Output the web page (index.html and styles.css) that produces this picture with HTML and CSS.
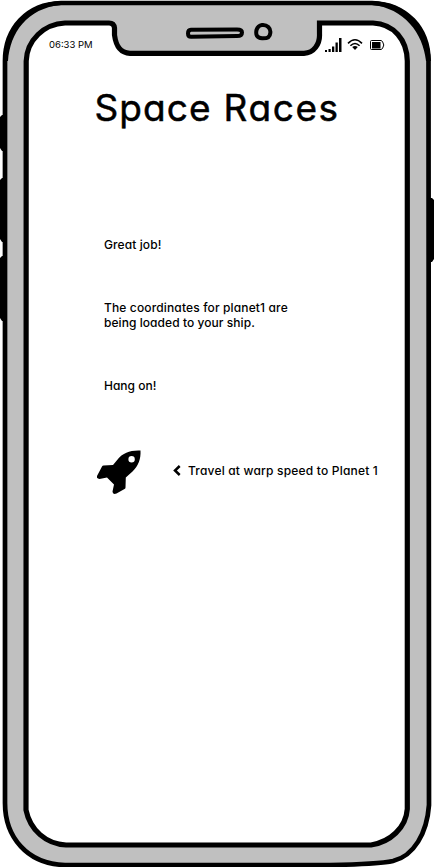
FILE: index.html
```
<!DOCTYPE html>
<html lang="en">
<head>
<meta charset="utf-8">
<title>Space Races</title>
<link rel="stylesheet" href="styles.css">
</head>
<body>
<div class="phone">
  <svg class="frame" viewBox="0 0 434 867" aria-hidden="true">
    <path class="button" d="M4 115H2L0 117V148L2 151H4ZM4 178H2L0 180V239L2 242H4ZM4 256H2L0 258V318L2 321H4ZM430 198H432L434 200V259L432 262H430Z"/>
    <path class="body" d="M61 3H372C406 4 428.500 28 428.500 61L429 805C427 833 414 856 393 861C379 864 360 864.500 330 865H65C27 864 5 837 5 803V61C5 28 27 4 61 3Z"/>
    <path class="shade" d="M61 1C27 2 4 29 3 61H8C10 33 27 8 61 5ZM372 1C407 2 429 27 431 61H426C423 33 404 8 372 5Z"/>
    <path class="screen" d="M65 23H109Q114 23 114.500 28V35C116 46 120 53 130 53.300H304C314 53 320 44 319.500 34V23H373C394 24 407 40 407.300 61V809C406 828 390 842 371 845H66C46 844 30 830 26 810L26.200 61C27 40 44 24 65 23Z"/>
    <path class="speaker" d="M191 29.800L237 29.500Q242 29.500 242 32.500Q242 36 237 36L191 36.800Q188 36.800 188 33.500Q188 30 191 29.800Z"/>
    <path class="camera" d="M262 25C267 24.500 271 28 270.300 33C270 37.500 267 38.500 262 38.300C257 38 255.500 35 256.500 30Q258 25.500 262 25Z"/>
  </svg>
  <main class="content">
    <header class="status">
      <span class="time">06:33 PM</span>
      <svg class="indicators" viewBox="0 0 62 16" aria-hidden="true">
        <path d="M0 12h2v2H0zM3.500 11h2.200V14h-2.200zM7 8.500h2.300V14H7zM10.500 4.500h2.300V14h-2.300zM14 0h2.500v14H14z"/>
        <path class="wave" d="M23 5.400Q30 -1.800 37 5.400M25.400 7.800Q30 3.200 34.600 7.800"/>
        <path d="M27.200 9.100Q30 7 32.800 9.100L30 12Z"/>
        <path class="cell" d="M46.500 2.500h9.500l1.500 1q2.600 3.500 0 7l-1.500 1h-9.500q-1 0-1-1v-7q0-1 1-1z"/>
        <path d="M47 4h8.500v6.500h-8.500z"/>
      </svg>
    </header>
    <h1 class="title"><span class="word">Space</span> Races</h1>
    <p class="line greeting">Great job!</p>
    <p class="line"><span class="first">The coordinates for planet1 are</span><br><span class="second">being loaded to your ship.</span></p>
    <p class="line wait">Hang on!</p>
    <div class="action">
      <svg class="rocket" viewBox="0 0 46 46" aria-hidden="true">
        <path fill-rule="evenodd" d="M44.500 .5C34 0 27 3 22 9L17 15L7.500 15.500Q6.500 15.500 6 16.500L1 26Q.5 28 2 28.500L3.500 29L11 27.500L18 34.500L16.500 41.500Q16.500 43.500 18.500 44L20.500 43.500L28.500 39Q29.500 38.500 29.500 37.500L29.800 27.500L36.500 21.500C42.500 15.500 45 9 44.500 .5ZM38.800 9.200A3.200 3.200 0 1 1 32.400 9.200A3.200 3.200 0 1 1 38.800 9.200Z"/>
      </svg>
      <svg class="chevron" viewBox="0 0 8 11" aria-hidden="true"><path d="M6.700 1L2 5.500L6.700 10"/></svg>
      <span class="travel">Travel at warp speed to Planet 1</span>
    </div>
  </main>
</div>
</body>
</html>
```
FILE: styles.css
```
* { box-sizing: border-box; }
body {
  margin: 0;
  background: #fff;
  color: #000;
  font-family: Inter, "Open Sans", sans-serif;
  font-feature-settings: "cv11" 1;
}
.phone { position: relative; width: 434px; height: 867px; overflow: hidden; }
.frame { position: absolute; inset: 0; width: 434px; height: 867px; stroke: #000; }
.button, .shade { fill: #000; stroke: none; }
.body { fill: #c0c0c0; stroke-width: 4.7; }
.screen { fill: #fff; stroke-width: 5.2; }
.speaker { fill: #c0c0c0; stroke-width: 4; }
.camera { fill: #c0c0c0; stroke-width: 4; }
.content { position: relative; display: flex; flex-direction: column; padding-top: 37px; }
.status { display: flex; justify-content: space-between; height: 16px; padding: 0 47px 0 49px; }
.time { font-size: 9.5px; line-height: 16px; letter-spacing: 0; }
.indicators { width: 62px; height: 16px; margin-top: 1px; }
.wave { fill: none; stroke: #000; stroke-width: 1.600; }
.cell { fill: none; stroke: #000; stroke-width: 1; }
.title {
  margin: 32px 0 0 94.5px;
  height: 46px;
  font-size: 37px;
  line-height: 46px;
  font-weight: 400;
  letter-spacing: 1.6px;
  white-space: nowrap;
  -webkit-text-stroke: 0.5px #000;
}
.word { letter-spacing: 1.05px; }
.line { margin: 48px 0 0 104px; font-size: 12px; line-height: 15px; font-weight: 450; white-space: nowrap; }
.first { letter-spacing: 0.14px; }
.second { letter-spacing: 0.06px; }
.greeting { margin-top: 106px; letter-spacing: 0.1px; }
.wait { margin-top: 48px; }
.action { display: flex; align-items: center; height: 46px; margin: 56.5px 0 0 96px; }
.rocket { width: 46px; height: 46px; }
.chevron { width: 8px; height: 11px; margin: -4px 0 0 31px; fill: none; stroke: #000; stroke-width: 2.5; }
.travel { margin-left: 7px; margin-top: -5px; font-size: 12px; line-height: 15px; font-weight: 450; letter-spacing: 0.19px; white-space: nowrap; }
```
